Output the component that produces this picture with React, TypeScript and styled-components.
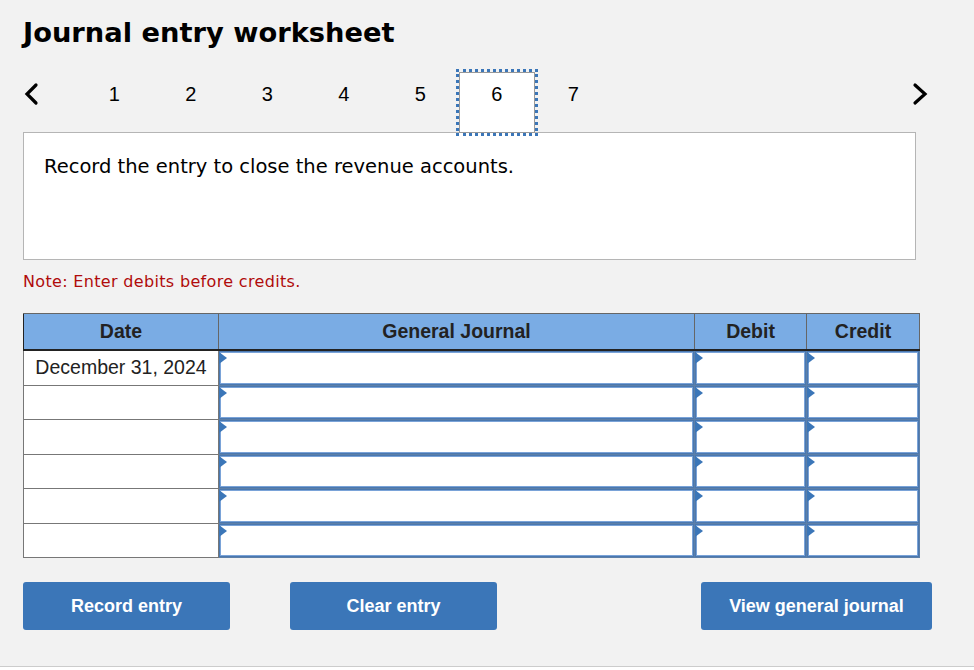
import React from "react";
import styled, { createGlobalStyle } from "styled-components";

const GlobalStyle = createGlobalStyle`
  html, body {
    margin: 0;
    padding: 0;
    background: #ffffff;
  }
`;

const Page = styled.div`
  width: 974px;
  height: 667px;
  box-sizing: border-box;
  padding: 16px 0 0 23px;
  background: #f2f2f2;
  border-bottom: 1px solid #cccccc;
  font-family: "Liberation Sans", Arial, sans-serif;
`;

const Title = styled.h1`
  margin: 0;
  height: 37px;
  font-family: "DejaVu Sans", Verdana, sans-serif;
  font-size: 27.3px;
  line-height: 34px;
  font-weight: 700;
  color: #000000;
`;

const TabBar = styled.div`
  display: flex;
  align-items: flex-start;
  width: 905px;
  height: 63px;
  margin-top: 16px;
`;

const Arrow = styled.div<{ $end?: boolean }>`
  width: ${(p) => (p.$end ? 16 : 53)}px;
  height: 50px;
  padding: 13px 0 0 ${(p) => (p.$end ? 0 : 0.5)}px;
  box-sizing: border-box;
  flex: none;
`;

const Tab = styled.div<{ $active?: boolean }>`
  width: 76.5px;
  height: 61px;
  margin-top: 3px;
  flex: none;
  text-align: center;
  font-size: 20px;
  line-height: 44px;
  color: #000000;
  position: relative;
  z-index: 1;
  background: ${(p) => (p.$active ? "#ffffff" : "transparent")};
  box-shadow: ${(p) => (p.$active ? "inset 0 0 0 1px #999999" : "none")};
  outline: ${(p) => (p.$active ? "3px dotted #3b76b8" : "none")};
`;

const Spacer = styled.div`
  flex: 1;
`;

const Panel = styled.div`
  width: 893px;
  height: 128px;
  box-sizing: border-box;
  padding: 21px 20px 20px;
  background: #ffffff;
  border: 1px solid #b5b5b5;
  font-family: "DejaVu Sans", Verdana, sans-serif;
  font-size: 19.5px;
  line-height: 26px;
  color: #000000;
`;

const Note = styled.p`
  margin: 12px 0 0;
  height: 41px;
  font-family: "DejaVu Sans", Verdana, sans-serif;
  font-size: 16px;
  letter-spacing: 0.33px;
  line-height: 20px;
  color: #b00b0b;
`;

const Table = styled.table`
  width: 896px;
  border-collapse: collapse;
  table-layout: fixed;
`;

const Head = styled.th`
  height: 35px;
  padding: 0;
  background: #7aace4;
  border: 1px solid #666666;
  border-bottom: 2px solid #222222;
  border-left-color: #222222;
  font-size: 19.5px;
  font-weight: 700;
  color: #222222;
`;

const DateCell = styled.td`
  height: 33.5px;
  padding: 0 0 2px;
  box-sizing: border-box;
  background: #ffffff;
  border: 1px solid #777777;
  text-align: center;
  font-size: 19.5px;
  line-height: 22px;
  color: #222222;
`;

const EntryCell = styled.td`
  height: 33.5px;
  padding: 0;
  background: #4a78b0;
  border: 1px solid #5d7fa8;
`;

const EntryBox = styled.div`
  position: relative;
  height: 31.5px;
  margin: 1px;
  box-sizing: border-box;
  background: #ffffff;
  border: 1px solid #7aa3d8;

  &::before {
    content: "";
    position: absolute;
    left: -2px;
    top: -1px;
    border-style: solid;
    border-width: 6px 0 6px 8px;
    border-color: transparent transparent transparent #3b76b8;
  }
`;

const Actions = styled.div`
  display: flex;
  width: 909px;
  margin-top: 24px;
`;

const ActionButton = styled.button<{ $width: number; $gap?: number; $push?: boolean }>`
  width: ${(p) => p.$width}px;
  height: 48px;
  margin-left: ${(p) => (p.$push ? "auto" : `${p.$gap ?? 0}px`)};
  padding: 0;
  border: none;
  border-radius: 3px;
  background: #3b76b8;
  color: #ffffff;
  font-family: "Liberation Sans", Arial, sans-serif;
  font-size: 18px;
  font-weight: 700;
`;

const Chevron = ({ flip }: { flip?: boolean }) => (
  <svg width="16" height="24" viewBox="0 0 16 24" fill="none">
    <path
      d={flip ? "M3 3 L13 12 L3 21" : "M12 3 L3 12 L12 21"}
      stroke="#000000"
      strokeWidth="3.2"
      strokeLinecap="round"
    />
  </svg>
);

const rows = ["December 31, 2024", "", "", "", "", ""];

export default function App() {
  return (
    <Page>
      <GlobalStyle />
      <Title>Journal entry worksheet</Title>
      <TabBar>
        <Arrow>
          <Chevron />
        </Arrow>
        {[1, 2, 3, 4, 5, 6, 7].map((n) => (
          <Tab key={n} $active={n === 6}>
            {n}
          </Tab>
        ))}
        <Spacer />
        <Arrow $end>
          <Chevron flip />
        </Arrow>
      </TabBar>
      <Panel>Record the entry to close the revenue accounts.</Panel>
      <Note>Note: Enter debits before credits.</Note>
      <Table>
        <colgroup>
          <col width="195" />
          <col width="476" />
          <col width="112" />
          <col width="113" />
        </colgroup>
        <thead>
          <tr>
            <Head>Date</Head>
            <Head>General Journal</Head>
            <Head>Debit</Head>
            <Head>Credit</Head>
          </tr>
        </thead>
        <tbody>
          {rows.map((date, i) => (
            <tr key={i}>
              <DateCell>{date}</DateCell>
              <EntryCell>
                <EntryBox />
              </EntryCell>
              <EntryCell>
                <EntryBox />
              </EntryCell>
              <EntryCell>
                <EntryBox />
              </EntryCell>
            </tr>
          ))}
        </tbody>
      </Table>
      <Actions>
        <ActionButton $width={207}>Record entry</ActionButton>
        <ActionButton $width={207} $gap={60}>
          Clear entry
        </ActionButton>
        <ActionButton $width={231} $push>
          View general journal
        </ActionButton>
      </Actions>
    </Page>
  );
}
